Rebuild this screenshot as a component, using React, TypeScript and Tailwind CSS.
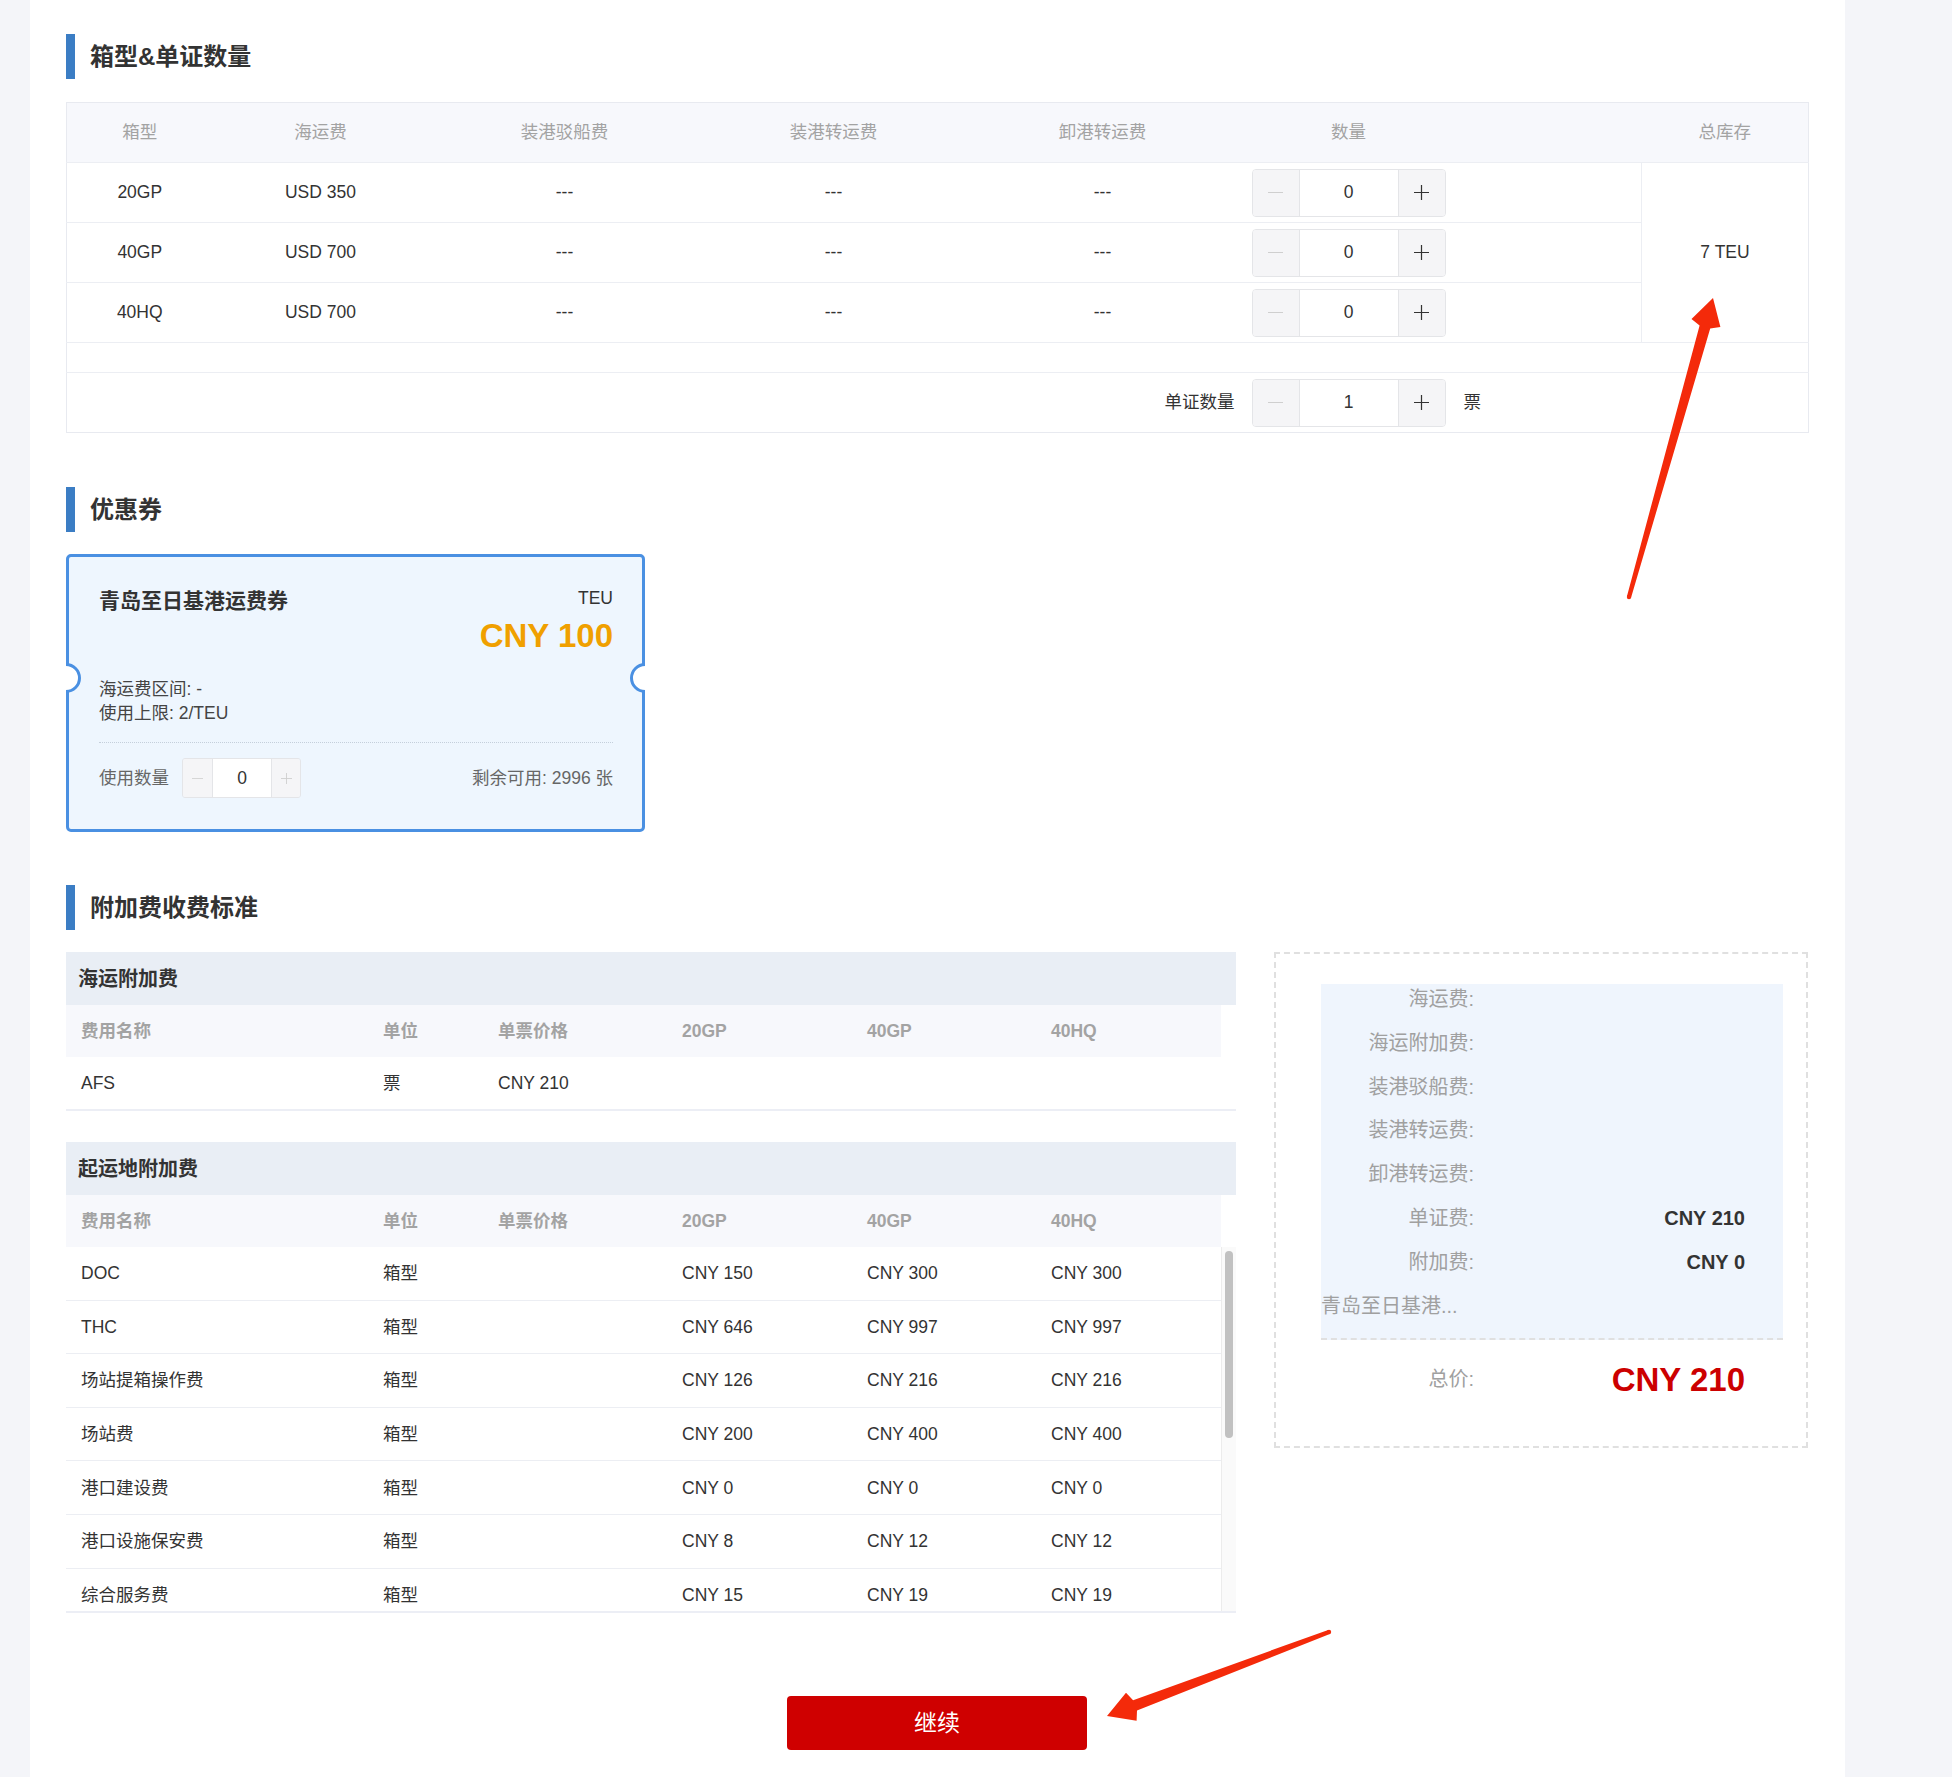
import React from "react";

type BoxRow = { type: string; freight: string };

type Fee = {
    name: string;
    unit: string;
    price: string;
    gp20: string;
    gp40: string;
    hq40: string;
};

const boxRows: BoxRow[] = [
    { type: "20GP", freight: "USD 350" },
    { type: "40GP", freight: "USD 700" },
    { type: "40HQ", freight: "USD 700" },
];

const seaFees: Fee[] = [
    { name: "AFS", unit: "票", price: "CNY 210", gp20: "", gp40: "", hq40: "" },
];

const originFees: Fee[] = [
    { name: "DOC", unit: "箱型", price: "", gp20: "CNY 150", gp40: "CNY 300", hq40: "CNY 300" },
    { name: "THC", unit: "箱型", price: "", gp20: "CNY 646", gp40: "CNY 997", hq40: "CNY 997" },
    { name: "场站提箱操作费", unit: "箱型", price: "", gp20: "CNY 126", gp40: "CNY 216", hq40: "CNY 216" },
    { name: "场站费", unit: "箱型", price: "", gp20: "CNY 200", gp40: "CNY 400", hq40: "CNY 400" },
    { name: "港口建设费", unit: "箱型", price: "", gp20: "CNY 0", gp40: "CNY 0", hq40: "CNY 0" },
    { name: "港口设施保安费", unit: "箱型", price: "", gp20: "CNY 8", gp40: "CNY 12", hq40: "CNY 12" },
    { name: "综合服务费", unit: "箱型", price: "", gp20: "CNY 15", gp40: "CNY 19", hq40: "CNY 19" },
];

const summary: [string, string][] = [
    ["海运费:", ""],
    ["海运附加费:", ""],
    ["装港驳船费:", ""],
    ["装港转运费:", ""],
    ["卸港转运费:", ""],
    ["单证费:", "CNY 210"],
    ["附加费:", "CNY 0"],
];

// tapered annotation arrow, page coordinates
function arrowPoints(x1: number, y1: number, x2: number, y2: number) {
    const dx = x2 - x1;
    const dy = y2 - y1;
    const len = Math.hypot(dx, dy);
    const ux = dx / len;
    const uy = dy / len;
    const nx = -uy;
    const ny = ux;
    const head = 26;
    const hw = 15;
    const sw = 5.5;
    const tw = 2.2;
    const bx = x2 - ux * head;
    const by = y2 - uy * head;
    const jx = x2 - ux * (head + 4);
    const jy = y2 - uy * (head + 4);
    const p = (x: number, y: number) => `${x.toFixed(1)},${y.toFixed(1)}`;
    return [
        p(x1 + nx * tw, y1 + ny * tw),
        p(jx + nx * sw, jy + ny * sw),
        p(bx + nx * hw, by + ny * hw),
        p(x2, y2),
        p(bx - nx * hw, by - ny * hw),
        p(jx - nx * sw, jy - ny * sw),
        p(x1 - nx * tw, y1 - ny * tw),
    ].join(" ");
}

function SectionTitle({ children }: { children: React.ReactNode }) {
    return (
        <div className="flex items-center h-[45px]">
            <div className="w-[9px] h-full bg-[#3b7dc4]" />
            <h2 className="ml-[15px] text-[24px] font-bold text-[#333]">{children}</h2>
        </div>
    );
}

function MinusIcon({ size, color }: { size: number; color: string }) {
    return (
        <svg width={size} height={size} viewBox="0 0 16 16">
            <line x1="0" y1="8" x2="16" y2="8" stroke={color} strokeWidth="1.2" />
        </svg>
    );
}

function PlusIcon({ size, color }: { size: number; color: string }) {
    return (
        <svg width={size} height={size} viewBox="0 0 16 16">
            <line x1="0" y1="8" x2="16" y2="8" stroke={color} strokeWidth="1.3" />
            <line x1="8" y1="0" x2="8" y2="16" stroke={color} strokeWidth="1.3" />
        </svg>
    );
}

function Stepper({ value }: { value: number }) {
    return (
        <div className="flex h-[48px] w-[194px] border border-[#e4e5e8] rounded-[4px] overflow-hidden">
            <div className="w-[47px] flex items-center justify-center bg-[#f5f5f7] border-r border-[#e4e5e8]">
                <MinusIcon size={15} color="#cfcfcf" />
            </div>
            <div className="flex-1 flex items-center justify-center bg-white text-[17.5px] text-[#333]">
                {value}
            </div>
            <div className="w-[47px] flex items-center justify-center bg-[#f5f5f7] border-l border-[#e4e5e8]">
                <PlusIcon size={15} color="#333" />
            </div>
        </div>
    );
}

function SmallStepper({ value }: { value: number }) {
    return (
        <div className="flex h-[40px] w-[119px] border border-[#e4e5e8] rounded-[3px] overflow-hidden">
            <div className="w-[30px] flex items-center justify-center bg-[#f5f5f7] border-r border-[#e4e5e8]">
                <MinusIcon size={11} color="#cfcfcf" />
            </div>
            <div className="flex-1 flex items-center justify-center bg-white text-[17.5px] text-[#333]">
                {value}
            </div>
            <div className="w-[29px] flex items-center justify-center bg-[#f5f5f7] border-l border-[#e4e5e8]">
                <PlusIcon size={11} color="#cfcfcf" />
            </div>
        </div>
    );
}

function Notch({ side }: { side: "left" | "right" }) {
    return (
        <div
            className={
                side === "left"
                    ? "absolute left-[-3px] top-[106px] w-[15px] h-[30px] overflow-hidden"
                    : "absolute right-[-3px] top-[106px] w-[15px] h-[30px] overflow-hidden"
            }
        >
            <div
                className={
                    side === "left"
                        ? "ml-[-15px] w-[30px] h-[30px] rounded-full bg-white border-[3px] border-[#4a90e2]"
                        : "w-[30px] h-[30px] rounded-full bg-white border-[3px] border-[#4a90e2]"
                }
            />
        </div>
    );
}

function FeeHeader() {
    return (
        <div className="w-[1155px] h-[52px] bg-[#f7f8fc] grid grid-cols-[302px_115px_184px_185px_184px_185px] items-center text-[17.5px] font-semibold text-[#a3a3a3]">
            <div className="pl-[15px]">费用名称</div>
            <div className="pl-[15px]">单位</div>
            <div className="pl-[15px]">单票价格</div>
            <div className="pl-[15px]">20GP</div>
            <div className="pl-[15px]">40GP</div>
            <div className="pl-[15px]">40HQ</div>
        </div>
    );
}

function FeeRow({ fee, last }: { fee: Fee; last?: boolean }) {
    return (
        <div
            className={
                last
                    ? "w-[1155px] h-[52px] shrink-0 grid grid-cols-[302px_115px_184px_185px_184px_185px] items-center text-[17.5px] text-[#333]"
                    : "w-[1155px] h-[53.6px] shrink-0 grid grid-cols-[302px_115px_184px_185px_184px_185px] items-center text-[17.5px] text-[#333] border-b border-[#eceef3]"
            }
        >
            <div className="pl-[15px]">{fee.name}</div>
            <div className="pl-[15px]">{fee.unit}</div>
            <div className="pl-[15px]">{fee.price}</div>
            <div className="pl-[15px]">{fee.gp20}</div>
            <div className="pl-[15px]">{fee.gp40}</div>
            <div className="pl-[15px]">{fee.hq40}</div>
        </div>
    );
}

export default function App() {
    return (
        <div className="relative w-full min-h-[1777px] bg-[#f4f5f9] font-['Liberation_Sans','Noto_Sans_CJK_SC',sans-serif]">
            <div className="ml-[30px] w-[1815px] min-h-[1777px] bg-white pl-[36px] pr-[37px] pt-[34px] pb-[26px] flex flex-col">
                {/* 箱型 & 单证 */}
                <SectionTitle>箱型&amp;单证数量</SectionTitle>
                <table className="mt-[23px] w-[1742px] table-fixed border-collapse border border-[#e8eaf0] text-[17.5px]">
                    <colgroup>
                        <col className="w-[146px]" />
                        <col className="w-[216px]" />
                        <col className="w-[272px]" />
                        <col className="w-[266px]" />
                        <col className="w-[272px]" />
                        <col className="w-[220px]" />
                        <col className="w-[183px]" />
                        <col className="w-[167px]" />
                    </colgroup>
                    <thead>
                        <tr className="h-[60px] bg-[#f7f8fc] text-[#a3a3a3]">
                            <th className="font-normal border-b border-[#eceef3]">箱型</th>
                            <th className="font-normal border-b border-[#eceef3]">海运费</th>
                            <th className="font-normal border-b border-[#eceef3]">装港驳船费</th>
                            <th className="font-normal border-b border-[#eceef3]">装港转运费</th>
                            <th className="font-normal border-b border-[#eceef3]">卸港转运费</th>
                            <th className="font-normal border-b border-[#eceef3]">数量</th>
                            <th className="font-normal border-b border-[#eceef3]"></th>
                            <th className="font-normal border-b border-[#eceef3]">总库存</th>
                        </tr>
                    </thead>
                    <tbody className="text-[#333]">
                        {boxRows.map((row, index) => (
                            <tr key={row.type} className="h-[60px]">
                                <td className="text-center border-b border-[#eceef3]">{row.type}</td>
                                <td className="text-center border-b border-[#eceef3]">{row.freight}</td>
                                <td className="text-center border-b border-[#eceef3]">---</td>
                                <td className="text-center border-b border-[#eceef3]">---</td>
                                <td className="text-center border-b border-[#eceef3]">---</td>
                                <td className="border-b border-[#eceef3]">
                                    <div className="flex justify-center">
                                        <Stepper value={0} />
                                    </div>
                                </td>
                                <td className="border-b border-[#eceef3]"></td>
                                {index === 0 && (
                                    <td rowSpan={3} className="text-center border-l border-b border-[#eceef3]">
                                        7 TEU
                                    </td>
                                )}
                            </tr>
                        ))}
                        <tr className="h-[30px]">
                            <td colSpan={8} className="border-b border-[#eceef3]"></td>
                        </tr>
                        <tr className="h-[60px]">
                            <td colSpan={5} className="text-right pr-[4px]">单证数量</td>
                            <td>
                                <div className="flex justify-center">
                                    <Stepper value={1} />
                                </div>
                            </td>
                            <td colSpan={2} className="pl-[5px]">票</td>
                        </tr>
                    </tbody>
                </table>

                {/* 优惠券 */}
                <div className="mt-[54px]">
                    <SectionTitle>优惠券</SectionTitle>
                </div>
                <div className="relative mt-[22px] w-[579px] h-[278px] border-[3px] border-[#4a90e2] rounded-[5px] bg-[#eef6fe] pl-[30px] pr-[29px] pt-[29px]">
                    <Notch side="left" />
                    <Notch side="right" />
                    <div className="flex justify-between items-start">
                        <div className="pt-[3px] leading-[24px] text-[21px] font-semibold text-[#333]">
                            青岛至日基港运费券
                        </div>
                        <div className="flex flex-col items-end">
                            <div className="leading-[24px] text-[17.5px] text-[#333]">TEU</div>
                            <div className="mt-[6px] leading-[40px] text-[33px] font-bold text-[#f0a000]">
                                CNY 100
                            </div>
                        </div>
                    </div>
                    <div className="mt-[21px] text-[17.5px] leading-[24px] text-[#444]">
                        <p>海运费区间: -</p>
                        <p>使用上限: 2/TEU</p>
                    </div>
                    <div className="mt-[17px] border-t border-dotted border-[#c4cfdb]" />
                    <div className="mt-[15px] flex items-center justify-between text-[17.5px] text-[#666]">
                        <div className="flex items-center gap-[13px]">
                            <span>使用数量</span>
                            <SmallStepper value={0} />
                        </div>
                        <span>剩余可用: 2996 张</span>
                    </div>
                </div>

                {/* 附加费 */}
                <div className="mt-[53px]">
                    <SectionTitle>附加费收费标准</SectionTitle>
                </div>
                <div className="mt-[22px] flex items-start gap-[38px]">
                    <div className="w-[1170px] flex flex-col">
                        <div className="h-[53px] bg-[#e9eef5] flex items-center pl-[12px] text-[20px] font-bold text-[#333]">
                            海运附加费
                        </div>
                        <div className="border-b-2 border-[#eceef5]">
                            <FeeHeader />
                            {seaFees.map((fee) => (
                                <FeeRow key={fee.name} fee={fee} last />
                            ))}
                        </div>

                        <div className="mt-[31px] h-[53px] bg-[#e9eef5] flex items-center pl-[12px] text-[20px] font-bold text-[#333]">
                            起运地附加费
                        </div>
                        <FeeHeader />
                        <div className="flex h-[366px] border-b-2 border-[#eceef5]">
                            <div className="w-[1155px] flex flex-col overflow-hidden">
                                {originFees.map((fee) => (
                                    <FeeRow key={fee.name} fee={fee} />
                                ))}
                            </div>
                            <div className="w-[15px] border-l border-[#ececec] bg-[#fafafa] flex justify-center pt-[4px]">
                                <div className="w-[8px] h-[187px] rounded-full bg-[#c1c1c1]" />
                            </div>
                        </div>
                    </div>

                    {/* 费用汇总 */}
                    <div className="w-[534px] h-[496px] border-2 border-dashed border-[#e0e0e0] pt-[30px]">
                        <div className="ml-[45px] mr-[23px] bg-[#eff5fd] border-b-2 border-dashed border-[#e0e0e0] pb-[17px] flex flex-col gap-[13.8px]">
                            {summary.map(([label, value]) => (
                                <div key={label} className="h-[30px] grid grid-cols-[153px_1fr] items-center text-[20px]">
                                    <div className="text-right text-[#a0a0a0]">{label}</div>
                                    <div className="text-right pr-[38px] font-bold text-[#333]">{value}</div>
                                </div>
                            ))}
                            <div className="h-[30px] grid grid-cols-[153px_1fr] items-center text-[20px]">
                                <div className="whitespace-nowrap text-[#a0a0a0]">青岛至日基港...</div>
                                <div />
                            </div>
                        </div>
                        <div className="ml-[45px] mr-[23px] mt-[15px] h-[40px] grid grid-cols-[153px_1fr] items-center">
                            <div className="text-right text-[20px] text-[#a0a0a0]">总价:</div>
                            <div className="text-right pr-[38px] text-[33px] font-bold text-[#cc0000]">CNY 210</div>
                        </div>
                    </div>
                </div>

                <button className="mt-[83px] mx-auto w-[300px] h-[54px] rounded-[4px] bg-[#cf0000] text-white text-[23px]">
                    继续
                </button>
            </div>

            <svg
                className="absolute left-0 top-0 pointer-events-none"
                width={1952}
                height={1777}
                viewBox="0 0 1952 1777"
            >
                <polygon points={arrowPoints(1629, 597, 1713, 298)} fill="#f42a0a" />
                <circle cx={1629} cy={597} r={2.2} fill="#f42a0a" />
                <polygon points={arrowPoints(1329, 1632, 1107, 1716)} fill="#f42a0a" />
                <circle cx={1329} cy={1632} r={2.2} fill="#f42a0a" />
            </svg>
        </div>
    );
}
